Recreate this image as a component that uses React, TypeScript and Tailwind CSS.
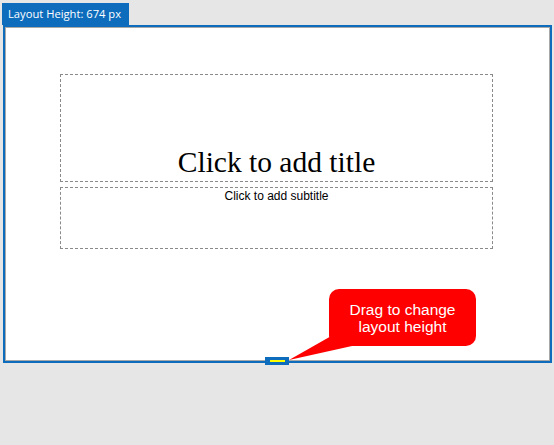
import React from "react";

export default function App() {
  return (
    <div className="relative w-[554px] h-[445px] bg-[#e6e6e6] overflow-hidden">
      <div className="flex pt-[3px] pl-[2px]">
        <div
          className="flex items-center h-[22px] w-[127px] pl-[6px] bg-[#0e6cbc] text-white text-[11.2px] leading-none whitespace-nowrap"
          style={{ fontFamily: '"Open Sans", "Noto Sans", sans-serif' }}
        >
          Layout Height: 674 px
        </div>
      </div>
      <div className="ml-[3px] w-[549px] h-[338px] border-2 border-[#0e6cbc] bg-white">
        <div className="w-full h-full border border-[#a8a8a8] pl-[54px] pt-[46px]">
          <div className="w-[433px] h-[108px] border border-dashed border-[#8a8a8a] flex items-end justify-center pb-[4px]">
            <span
              className="text-[29.5px] leading-none text-black"
              style={{ fontFamily: '"Liberation Serif", "Times New Roman", serif' }}
            >
              Click to add title
            </span>
          </div>
          <div className="mt-[5px] w-[433px] h-[62px] border border-dashed border-[#8a8a8a] flex justify-center">
            <span
              className="text-[12px] text-black leading-normal -mt-[1px]"
              style={{ fontFamily: '"Liberation Sans", Arial, sans-serif' }}
            >
              Click to add subtitle
            </span>
          </div>
        </div>
      </div>

      {/* resize handle */}
      <div className="absolute left-[265px] top-[357px] w-[24px] h-[8px] bg-[#0e6cbc] flex items-center justify-center">
        <div className="w-[15px] h-[2px] bg-[#ffff00]" />
      </div>

      {/* callout tail */}
      <svg className="absolute left-0 top-0" width="554" height="445" viewBox="0 0 554 445">
        <polygon points="333,335 352,346 289,360" fill="#ff0000" />
      </svg>

      {/* callout */}
      <div
        className="absolute left-[329px] top-[289px] w-[147px] h-[57px] rounded-[10px] bg-[#ff0000] text-white flex flex-col items-center justify-center text-[15.5px] leading-[17px]"
        style={{ fontFamily: '"Liberation Sans", Arial, sans-serif' }}
      >
        <span>Drag to change</span>
        <span>layout height</span>
      </div>
    </div>
  );
}
